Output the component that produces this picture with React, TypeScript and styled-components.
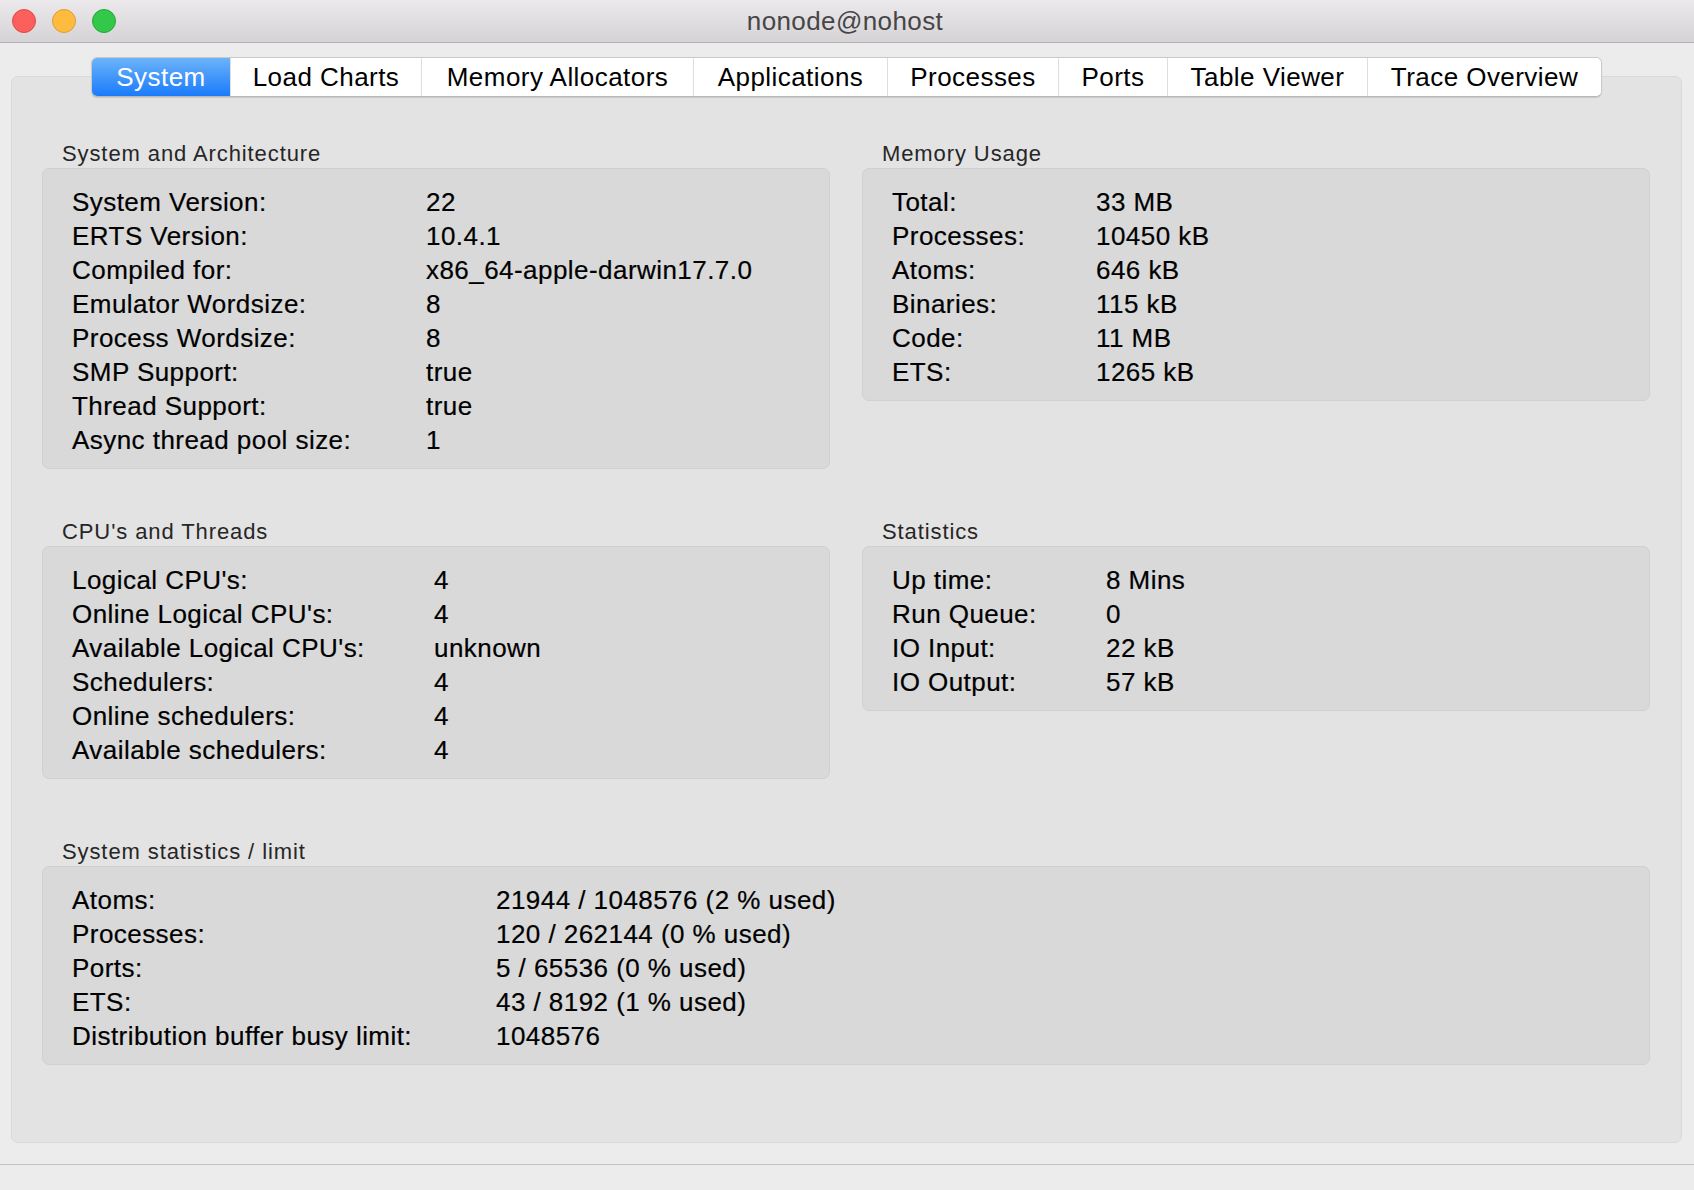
import React from 'react';
import styled, { createGlobalStyle } from 'styled-components';

const GlobalStyle = createGlobalStyle`
  html, body {
    margin: 0;
    padding: 0;
    background: #ececec;
  }
  body {
    font-family: "Liberation Sans", Arial, Helvetica, sans-serif;
  }
`;

// Window chrome
const Window = styled.div`
  height: 1190px;
  display: flex;
  flex-direction: column;
  background: #ececec;
  overflow: hidden;
`;

const TitleBar = styled.div`
  height: 42px;
  flex: 0 0 auto;
  display: grid;
  grid-template-columns: 1fr auto 1fr;
  align-items: center;
  background: linear-gradient(to bottom, #ebe9eb, #d5d3d5);
  border-bottom: 1px solid #b4b2b4;
`;

const Lights = styled.div`
  display: flex;
  gap: 16px;
  padding-left: 12px;
`;

const Light = styled.span<{ $fill: string; $edge: string }>`
  width: 24px;
  height: 24px;
  border-radius: 50%;
  box-sizing: border-box;
  background: ${p => p.$fill};
  border: 1px solid ${p => p.$edge};
`;

const Title = styled.div`
  font-size: 26px;
  letter-spacing: 0.4px;
  color: #474647;
  line-height: 42px;
  margin-left: -4px;
`;

const Body = styled.div`
  flex: 1;
  display: flex;
  flex-direction: column;
  padding: 14px 12px 0 11px;
`;

// Tab strip
const TabBar = styled.div`
  align-self: center;
  display: flex;
  height: 40px;
  box-sizing: border-box;
  border: 1px solid #c9c9c9;
  border-bottom-color: #b8b8b8;
  border-radius: 6px;
  background: #fff;
  overflow: hidden;
  box-shadow: 0 1px 1px rgba(0, 0, 0, 0.12);
  position: relative;
  z-index: 2;
`;

const Tab = styled.div<{ $w: number; $active?: boolean }>`
  width: ${p => p.$w}px;
  box-sizing: border-box;
  display: flex;
  align-items: center;
  justify-content: center;
  font-size: 26px;
  letter-spacing: 0.45px;
  color: ${p => (p.$active ? '#fff' : '#000')};
  background: ${p => (p.$active ? 'linear-gradient(to bottom, #6cb3fa, #1a7bfb)' : '#fff')};
  & + & {
    border-left: 1px solid #dedede;
  }
`;

const Panel = styled.div`
  flex: 1;
  margin-top: -21px;
  margin-bottom: 21px;
  background: #e3e3e3;
  border: 1px solid #d9d9d9;
  border-radius: 7px;
  padding: 63px 31px 0 30px;
  display: flex;
  flex-direction: column;
`;

const Row = styled.div<{ $top?: number; $cols?: number }>`
  display: grid;
  grid-template-columns: ${p => (p.$cols === 1 ? '1fr' : '1fr 1fr')};
  column-gap: 32px;
  align-items: start;
  margin-top: ${p => p.$top || 0}px;
`;

const Section = styled.section`
  display: flex;
  flex-direction: column;
`;

const GroupLabel = styled.div`
  font-size: 22px;
  letter-spacing: 0.9px;
  line-height: 26px;
  color: #262626;
  padding-left: 20px;
  padding-top: 1px;
  margin-bottom: 1px;
`;

const GroupBox = styled.div<{ $labelCol: number }>`
  background: #d9d9d9;
  border: 1px solid #d0d0d0;
  border-radius: 7px;
  padding: 16px 0 11px 29px;
  display: grid;
  grid-template-columns: ${p => p.$labelCol}px 1fr;
  grid-auto-rows: 34px;
  align-items: center;
`;

const Cell = styled.div`
  font-size: 26px;
  letter-spacing: 0.45px;
  line-height: 34px;
  color: #000;
  white-space: nowrap;
  -webkit-text-stroke: 0.2px #000;
`;

const Footer = styled.div`
  height: 25px;
  flex: 0 0 auto;
  border-top: 1px solid #c2c2c2;
  background: #ececec;
`;

const tabs = [
  { name: 'System', w: 138 },
  { name: 'Load Charts', w: 191 },
  { name: 'Memory Allocators', w: 272 },
  { name: 'Applications', w: 194 },
  { name: 'Processes', w: 171 },
  { name: 'Ports', w: 109 },
  { name: 'Table Viewer', w: 200 },
  { name: 'Trace Overview', w: 234 },
];

const sysArch: [string, string][] = [
  ['System Version:', '22'],
  ['ERTS Version:', '10.4.1'],
  ['Compiled for:', 'x86_64-apple-darwin17.7.0'],
  ['Emulator Wordsize:', '8'],
  ['Process Wordsize:', '8'],
  ['SMP Support:', 'true'],
  ['Thread Support:', 'true'],
  ['Async thread pool size:', '1'],
];

const memory: [string, string][] = [
  ['Total:', '33 MB'],
  ['Processes:', '10450 kB'],
  ['Atoms:', '646 kB'],
  ['Binaries:', '115 kB'],
  ['Code:', '11 MB'],
  ['ETS:', '1265 kB'],
];

const cpus: [string, string][] = [
  ["Logical CPU's:", '4'],
  ["Online Logical CPU's:", '4'],
  ["Available Logical CPU's:", 'unknown'],
  ['Schedulers:', '4'],
  ['Online schedulers:', '4'],
  ['Available schedulers:', '4'],
];

const stats: [string, string][] = [
  ['Up time:', '8 Mins'],
  ['Run Queue:', '0'],
  ['IO Input:', '22 kB'],
  ['IO Output:', '57 kB'],
];

const limits: [string, string][] = [
  ['Atoms:', '21944 / 1048576 (2 % used)'],
  ['Processes:', '120 / 262144 (0 % used)'],
  ['Ports:', '5 / 65536 (0 % used)'],
  ['ETS:', '43 / 8192 (1 % used)'],
  ['Distribution buffer busy limit:', '1048576'],
];

const InfoGroup = ({ title, rows, labelCol }: { title: string; rows: [string, string][]; labelCol: number }) => (
  <Section>
    <GroupLabel>{title}</GroupLabel>
    <GroupBox $labelCol={labelCol}>
      {rows.map(([k, v]) => (
        <React.Fragment key={k}>
          <Cell>{k}</Cell>
          <Cell>{v}</Cell>
        </React.Fragment>
      ))}
    </GroupBox>
  </Section>
);

export default function App() {
  return (
    <Window>
      <GlobalStyle />
      <TitleBar>
        <Lights>
          <Light $fill="#fc605c" $edge="#df4944" />
          <Light $fill="#fdbc40" $edge="#de9f2a" />
          <Light $fill="#34c84a" $edge="#25a63a" />
        </Lights>
        <Title>nonode@nohost</Title>
        <div />
      </TitleBar>
      <Body>
        <TabBar>
          {tabs.map((t, i) => (
            <Tab key={t.name} $w={t.w} $active={i === 0}>
              {t.name}
            </Tab>
          ))}
        </TabBar>
        <Panel>
          <Row>
            <InfoGroup title="System and Architecture" rows={sysArch} labelCol={354} />
            <InfoGroup title="Memory Usage" rows={memory} labelCol={204} />
          </Row>
          <Row $top={49}>
            <InfoGroup title="CPU's and Threads" rows={cpus} labelCol={362} />
            <InfoGroup title="Statistics" rows={stats} labelCol={214} />
          </Row>
          <Row $top={59} $cols={1}>
            <InfoGroup title="System statistics / limit" rows={limits} labelCol={424} />
          </Row>
        </Panel>
      </Body>
      <Footer />
    </Window>
  );
}
